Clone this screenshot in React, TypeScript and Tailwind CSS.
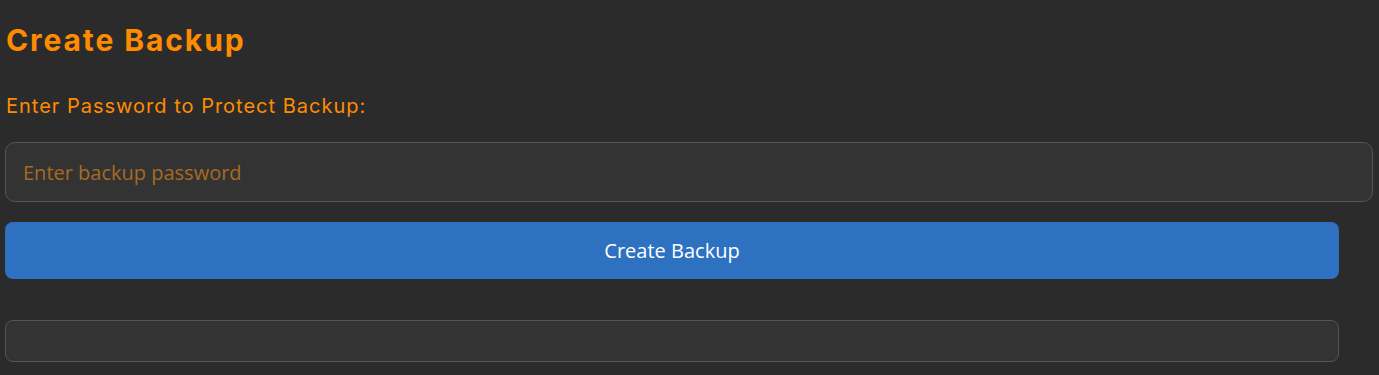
import React, { useState } from 'react';

// Backup creation panel
const App: React.FC = () => {
  const [password, setPassword] = useState('');

  return (
    <div className="min-h-[375px] w-full bg-[#2b2b2b] px-[5px] pt-[18px]" style={{ fontFamily: '"Open Sans", sans-serif' }}>
      <h1 className="ml-px text-[30px] font-bold leading-[44px] tracking-[1.9px] text-[#ff8c00]" style={{ fontFamily: 'Inter, sans-serif' }}>
        Create Backup
      </h1>
      <label className="mt-[30px] ml-px block text-[20px] leading-[28px] tracking-[1px] text-[#ff8c00]" style={{ fontFamily: 'Inter, sans-serif' }}>
        Enter Password to Protect Backup:
      </label>
      <input
        type="password"
        value={password}
        onChange={(e) => setPassword(e.target.value)}
        placeholder="Enter backup password"
        className="mt-[22px] block h-[60px] w-[1368px] rounded-[10px] border border-[#555] bg-[#333] px-[17px] text-[20px] text-[#ff8c00] outline-none placeholder:text-[#a86a22]"
      />
      <button className="mt-[20px] block h-[57px] w-[1334px] rounded-[8px] bg-[#2e71c0] text-[20px] text-white">
        Create Backup
      </button>
      <div className="mt-[41px] h-[42px] w-[1334px] rounded-[8px] border border-[#555] bg-[#333]"></div>
    </div>
  );
};

export default App;
